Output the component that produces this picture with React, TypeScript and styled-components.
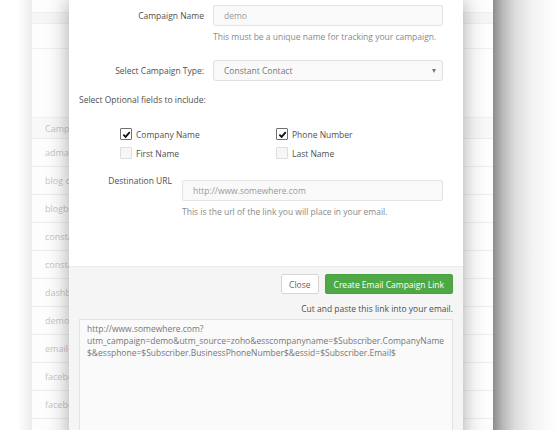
import React from "react";
import styled, { createGlobalStyle } from "styled-components";

const GlobalStyle = createGlobalStyle`
    html, body {
        margin: 0;
        padding: 0;
        background: #ffffff;
    }
    body {
        font-family: "Open Sans", "Liberation Sans", sans-serif;
        font-size: 8.5px;
        color: #555;
    }
    * {
        box-sizing: border-box;
    }
`;

const campaigns = [
    "admail",
    "blog campaign",
    "blogbox",
    "constant contact",
    "constant test",
    "dashboard",
    "demo",
    "email-blast",
    "facebook ads",
    "facebook post",
];

const fields = [
    { label: "Company Name", checked: true },
    { label: "Phone Number", checked: true },
    { label: "First Name", checked: false },
    { label: "Last Name", checked: false },
];

const trackingLink = [
    "http://www.somewhere.com?",
    "utm_campaign=demo&utm_source=zoho&esscompanyname=$Subscriber.CompanyName",
    "$&essphone=$Subscriber.BusinessPhoneNumber$&essid=$Subscriber.Email$",
];

const App = () => {
    return (
        <>
            <GlobalStyle />
            <Stage>
                <Panel>
                    <TopBand />
                    <NavRow />
                    <Table>
                        <HeaderCell>Campaign Name</HeaderCell>
                        {campaigns.map((name) => (
                            <Row key={name}>{name}</Row>
                        ))}
                    </Table>

                    <Modal>
                        <ModalBody>
                            <FieldRow gap={17}>
                                <Label>Campaign Name</Label>
                                <div>
                                    <Input defaultValue="demo" readOnly />
                                    <Help>This must be a unique name for tracking your campaign.</Help>
                                </div>
                            </FieldRow>

                            <FieldRow gap={13}>
                                <Label>Select Campaign Type:</Label>
                                <Select>
                                    <span>Constant Contact</span>
                                    <Caret />
                                </Select>
                            </FieldRow>

                            <SectionTitle>Select Optional fields to include:</SectionTitle>

                            <CheckGrid>
                                {fields.map((f) => (
                                    <CheckItem key={f.label}>
                                        <Box checked={f.checked}>
                                            {f.checked && (
                                                <svg width="9" height="9" viewBox="0 0 10 10">
                                                    <path d="M1.5 5.2 L4 7.6 L8.6 2.4" fill="none" stroke="#111" strokeWidth="2" />
                                                </svg>
                                            )}
                                        </Box>
                                        {f.label}
                                    </CheckItem>
                                ))}
                            </CheckGrid>

                            <UrlRow>
                                <UrlLabel>Destination URL</UrlLabel>
                                <div>
                                    <Input placeholder="http://www.somewhere.com" readOnly />
                                    <Help>This is the url of the link you will place in your email.</Help>
                                </div>
                            </UrlRow>
                        </ModalBody>

                        <Footer>
                            <ButtonRow>
                                <Button variant="default">Close</Button>
                                <Button variant="success">Create Email Campaign Link</Button>
                            </ButtonRow>
                            <PasteNote>Cut and paste this link into your email.</PasteNote>
                            <LinkBox>
                                {trackingLink.map((line) => (
                                    <div key={line}>{line}</div>
                                ))}
                            </LinkBox>
                        </Footer>
                    </Modal>
                </Panel>
            </Stage>
        </>
    );
};

const Stage = styled.div`
    width: 558px;
    height: 430px;
    overflow: hidden;
    padding-left: 32px;
    background: linear-gradient(to right, #ffffff 0, #ffffff 18px, #ececec 32px);
`;

const Panel = styled.div`
    position: relative;
    width: 461px;
    height: 100%;
    padding-top: 12px;
    background: #fdfdfd;

    &::after {
        content: "";
        position: absolute;
        top: 0;
        bottom: 0;
        left: 100%;
        width: 65px;
        background: linear-gradient(to right, #8c8c8c 0, #b9b9b9 10px, #dcdcdc 22px, #f3f3f3 40px, #ffffff 65px);
    }
`;

const TopBand = styled.div`
    height: 12px;
    background: #f6f6f6;
    border-top: 1px solid #efefef;
    border-bottom: 1px solid #efefef;
`;

const NavRow = styled.div`
    height: 25px;
    border-bottom: 1px solid #f0f0f0;
`;

const Table = styled.div`
    margin-top: 68px;
    display: flex;
    flex-direction: column;
    font-size: 9px;
    white-space: nowrap;
`;

const HeaderCell = styled.div`
    height: 22px;
    padding-left: 13px;
    display: flex;
    align-items: center;
    background: #f8f8f8;
    border-top: 1px solid #f0f0f0;
    border-bottom: 1px solid #ececec;
    color: #c4c4c4;
`;

const Row = styled.div`
    height: 28px;
    padding-left: 13px;
    display: flex;
    align-items: center;
    border-bottom: 1px solid #eeeeee;
    color: #c6c6c6;
`;

const Modal = styled.div`
    position: absolute;
    top: 0;
    left: 37px;
    width: 394px;
    height: 460px;
    background: #ffffff;
    display: flex;
    flex-direction: column;
    box-shadow: 0 0 20px rgba(0, 0, 0, 0.34);
`;

const ModalBody = styled.div`
    height: 266px;
    padding: 5px 20px 0 10px;
    display: flex;
    flex-direction: column;
`;

const FieldRow = styled.div<{ gap: number }>`
    display: grid;
    grid-template-columns: 125px 1fr;
    column-gap: 9px;
    align-items: start;
    margin-bottom: ${(p) => p.gap}px;
`;

const Label = styled.div`
    height: 21px;
    line-height: 21px;
    text-align: right;
    color: #505050;
`;

const Input = styled.input`
    display: block;
    width: 100%;
    height: 21px;
    padding: 0 10px;
    font-family: inherit;
    font-size: 8.5px;
    color: #999;
    background: #f9f9f9;
    border: 1px solid #e4e4e4;
    border-radius: 2px;
    outline: none;

    &::placeholder {
        color: #999;
    }
`;

const Help = styled.div`
    margin-top: 5px;
    line-height: 12px;
    color: #8a8a8a;
`;

const Select = styled.div`
    height: 21px;
    padding: 0 6px 0 10px;
    display: flex;
    align-items: center;
    justify-content: space-between;
    color: #777;
    background: #f9f9f9;
    border: 1px solid #e0e0e0;
    border-radius: 3px;
`;

const Caret = styled.span`
    width: 0;
    height: 0;
    border-left: 2.5px solid transparent;
    border-right: 2.5px solid transparent;
    border-top: 4px solid #777;
`;

const SectionTitle = styled.div`
    line-height: 12px;
    color: #505050;
`;

const CheckGrid = styled.div`
    margin: 22px 0 0 41px;
    display: grid;
    grid-template-columns: 156px 1fr;
    row-gap: 7px;
`;

const CheckItem = styled.label`
    display: flex;
    align-items: center;
    gap: 4px;
    color: #505050;
    height: 12px;
`;

const Box = styled.span<{ checked: boolean }>`
    width: 12px;
    height: 12px;
    display: flex;
    align-items: center;
    justify-content: center;
    background: ${(p) => (p.checked ? "#ffffff" : "#f7f7f7")};
    border: 1px solid ${(p) => (p.checked ? "#6f6f6f" : "#dddddd")};
    border-radius: 1px;
`;

const UrlRow = styled.div`
    margin-top: 21px;
    display: grid;
    grid-template-columns: 93px 1fr;
    column-gap: 10px;
`;

const UrlLabel = styled.div`
    text-align: right;
    color: #505050;
    line-height: 12px;
    margin-top: -5px;
`;

const Footer = styled.div`
    flex: 1;
    background: #f5f5f5;
    border-top: 1px solid #ededed;
    padding: 7px 10px 0 10px;
    display: flex;
    flex-direction: column;
`;

const ButtonRow = styled.div`
    display: flex;
    justify-content: flex-end;
    gap: 6px;
`;

const Button = styled.button<{ variant: "default" | "success" }>`
    height: 20px;
    padding: 0 ${(p) => (p.variant === "success" ? "8px" : "7px")};
    font-family: inherit;
    font-size: 8.5px;
    border-radius: 2px;
    color: ${(p) => (p.variant === "success" ? "#ffffff" : "#666")};
    background: ${(p) => (p.variant === "success" ? "#4fa846" : "#ffffff")};
    border: 1px solid ${(p) => (p.variant === "success" ? "#48a03f" : "#d6d6d6")};
`;

const PasteNote = styled.div`
    margin-top: 9px;
    line-height: 12px;
    text-align: right;
    color: #505050;
`;

const LinkBox = styled.div`
    margin-top: 4px;
    flex: 1;
    padding: 3px 7px;
    background: #fafafa;
    border: 1px solid #e2e2e2;
    color: #777;
    line-height: 12px;
    white-space: nowrap;
`;

export default App;
